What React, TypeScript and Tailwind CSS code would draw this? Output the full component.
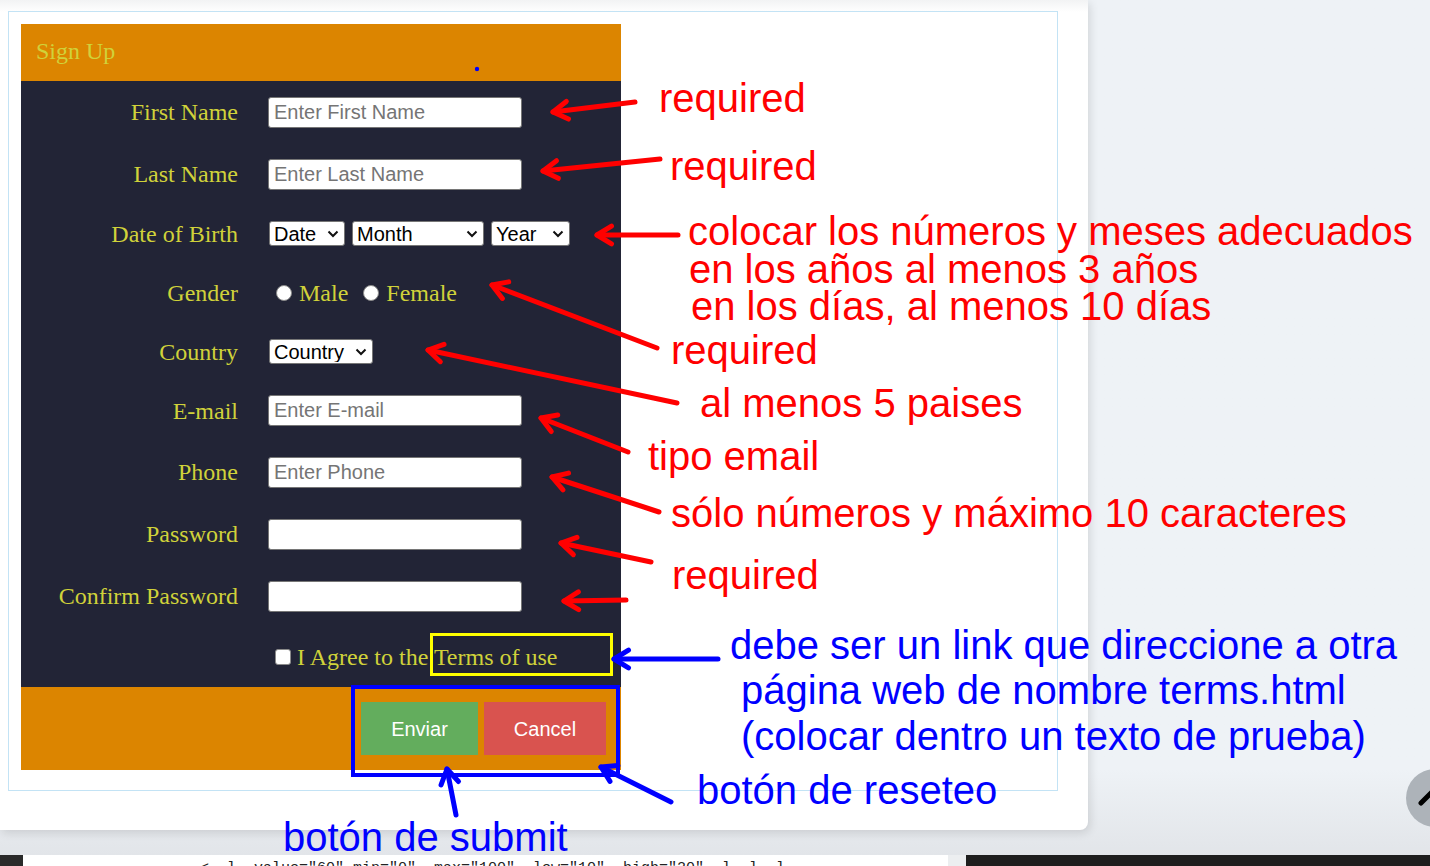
import React from "react";

const serif = { fontFamily: '"Liberation Serif", "Times New Roman", serif' };
const sans = { fontFamily: '"Liberation Sans", Arial, sans-serif' };

type Arrow = [number, number, number, number, string];

const arrows: Arrow[] = [
  [635, 102, 553, 112, "#ff0000"],
  [660, 159, 543, 171, "#ff0000"],
  [678, 235, 597, 235, "#ff0000"],
  [657, 348, 492, 285, "#ff0000"],
  [677, 403, 428, 350, "#ff0000"],
  [628, 452, 541, 418, "#ff0000"],
  [659, 512, 552, 477, "#ff0000"],
  [651, 562, 561, 543, "#ff0000"],
  [626, 600, 564, 601, "#ff0000"],
  [718, 659, 614, 659, "#0000ff"],
  [671, 802, 601, 767, "#0000ff"],
  [456, 815, 447, 769, "#0000ff"],
];

type Note = { x: number; base: number; text: string; color: string };

const notes: Note[] = [
  { x: 659, base: 112, text: "required", color: "#ff0000" },
  { x: 670, base: 180, text: "required", color: "#ff0000" },
  { x: 688, base: 245, text: "colocar los números y meses adecuados", color: "#ff0000" },
  { x: 689, base: 283, text: "en los años al menos 3 años", color: "#ff0000" },
  { x: 691, base: 320, text: "en los días, al menos 10 días", color: "#ff0000" },
  { x: 671, base: 364, text: "required", color: "#ff0000" },
  { x: 700, base: 417, text: "al menos 5 paises", color: "#ff0000" },
  { x: 648, base: 470, text: "tipo email", color: "#ff0000" },
  { x: 671, base: 527, text: "sólo números y máximo 10 caracteres", color: "#ff0000" },
  { x: 672, base: 589, text: "required", color: "#ff0000" },
  { x: 730, base: 659, text: "debe ser un link que direccione a otra", color: "#0000ff" },
  { x: 741, base: 704, text: "página web de nombre terms.html", color: "#0000ff" },
  { x: 741, base: 750, text: "(colocar dentro un texto de prueba)", color: "#0000ff" },
  { x: 697, base: 804, text: "botón de reseteo", color: "#0000ff" },
  { x: 283, base: 851, text: "botón de submit", color: "#0000ff" },
];

function head(a: Arrow) {
  const [x1, y1, x2, y2] = a;
  const ang = Math.atan2(y1 - y2, x1 - x2);
  const L = 17;
  const s = 0.55;
  const ax = x2 + L * Math.cos(ang + s);
  const ay = y2 + L * Math.sin(ang + s);
  const bx = x2 + L * Math.cos(ang - s);
  const by = y2 + L * Math.sin(ang - s);
  return `M${ax} ${ay} L${x2} ${y2} L${bx} ${by}`;
}

function Chevron() {
  return (
    <svg width="12" height="8" viewBox="0 0 12 8" className="pointer-events-none absolute right-[6px] top-1/2 -translate-y-1/2">
      <path d="M1.5 1.5 L6 6 L10.5 1.5" fill="none" stroke="#111" strokeWidth="2" />
    </svg>
  );
}

function Select({ w, label, options }: { w: number; label: string; options: string[] }) {
  return (
    <div className="relative h-[25px]" style={{ width: w }}>
      <select
        defaultValue=""
        className="h-full w-full appearance-none rounded-[3px] border border-[#767676] bg-white pl-[4px] text-[20px] leading-none text-black outline-none"
        style={sans}
      >
        <option value="">{label}</option>
        {options.map((o) => (
          <option key={o} value={o}>
            {o}
          </option>
        ))}
      </select>
      <Chevron />
    </div>
  );
}

function TextInput({ placeholder, type = "text" }: { placeholder?: string; type?: string }) {
  return (
    <input
      type={type}
      placeholder={placeholder}
      className="h-[31px] w-[254px] rounded-[3px] border border-[#767676] bg-white px-[5px] text-[20px] text-black placeholder:text-[#757575] outline-none"
      style={sans}
    />
  );
}

function Row({ h, label, children }: { h: number; label: string; children?: React.ReactNode }) {
  return (
    <div className="flex items-center" style={{ height: h }}>
      <div className="w-[217px] text-right text-[24px] leading-none text-[#d0d23a]" style={serif}>
        {label}
      </div>
      <div className="ml-[30px] flex items-center">{children}</div>
    </div>
  );
}

export default function App() {
  const days = Array.from({ length: 31 }, (_, i) => String(i + 1));
  const months = ["Enero", "Febrero", "Marzo", "Abril", "Mayo", "Junio", "Julio", "Agosto", "Septiembre", "Octubre", "Noviembre", "Diciembre"];
  const years = ["2000", "2001", "2002", "2003", "2004"];
  const countries = ["Perú", "Chile", "México", "Colombia", "Argentina"];

  return (
    <div className="relative h-[866px] w-[1430px] overflow-hidden bg-[#eef2f6]">
      <div className="flex h-full flex-col">
        <div className="relative h-[855px] bg-gradient-to-b from-[#eef2f6] from-[90%] to-[#e2e5e9]">
          <div className="relative h-[830px] w-[1088px] rounded-br-[8px] bg-white pl-[8px] pt-[11px] shadow-[2px_3px_10px_rgba(0,0,0,0.12)]">
            <div className="absolute left-0 top-0 h-[12px] w-full bg-gradient-to-b from-[#f2f3f4] to-white" />
            <div className="relative h-[780px] w-[1050px] border border-[#c3e3f5] pl-[12px] pt-[12px]">
              <form className="w-[600px]">
                <div className="flex h-[57px] items-center bg-[#dc8500] pb-[3px] pl-[15px]">
                  <span className="text-[24px] leading-none text-[#d0d23a]" style={serif}>
                    Sign Up
                  </span>
                </div>
                <div className="bg-[#222436]">
                  <Row h={62} label="First Name">
                    <TextInput placeholder="Enter First Name" />
                  </Row>
                  <Row h={62} label="Last Name">
                    <TextInput placeholder="Enter Last Name" />
                  </Row>
                  <Row h={57} label="Date of Birth">
                    <div className="ml-[1px] flex items-center gap-[7px]">
                      <Select w={76} label="Date" options={days} />
                      <Select w={132} label="Month" options={months} />
                      <Select w={79} label="Year" options={years} />
                    </div>
                  </Row>
                  <Row h={61} label="Gender">
                    <label className="ml-[8px] flex items-center text-[24px] leading-none text-[#d0d23a]" style={serif}>
                      <input type="radio" name="g" className="h-[16px] w-[16px] appearance-none rounded-full border border-[#8a8a8a] bg-white" />
                      <span className="ml-[7px]">Male</span>
                    </label>
                    <label className="ml-[15px] flex items-center text-[24px] leading-none text-[#d0d23a]" style={serif}>
                      <input type="radio" name="g" className="h-[16px] w-[16px] appearance-none rounded-full border border-[#8a8a8a] bg-white" />
                      <span className="ml-[7px]">Female</span>
                    </label>
                  </Row>
                  <Row h={57} label="Country">
                    <div className="ml-[1px]">
                      <Select w={104} label="Country" options={countries} />
                    </div>
                  </Row>
                  <Row h={61} label="E-mail">
                    <TextInput type="email" placeholder="Enter E-mail" />
                  </Row>
                  <Row h={62} label="Phone">
                    <TextInput placeholder="Enter Phone" />
                  </Row>
                  <Row h={62} label="Password">
                    <TextInput type="password" />
                  </Row>
                  <Row h={62} label="Confirm Password">
                    <TextInput type="password" />
                  </Row>
                  <div className="flex h-[60px] items-center pl-[254px]">
                    <input type="checkbox" className="h-[16px] w-[16px] appearance-none rounded-[3px] border border-[#8a8a8a] bg-white" />
                    <span className="ml-[6px] text-[24px] leading-none text-[#d0d23a]" style={serif}>
                      I Agree to the{" "}
                      <a href="terms.html" className="text-[#d0d23a] no-underline">
                        Terms of use
                      </a>
                    </span>
                  </div>
                </div>
                <div className="flex h-[83px] items-center justify-end gap-[6px] bg-[#dc8500] pr-[15px]">
                  <button type="submit" className="h-[53px] w-[117px] bg-[#63ad5d] text-[20px] text-white" style={sans}>
                    Enviar
                  </button>
                  <button type="reset" className="h-[53px] w-[122px] bg-[#d9534f] text-[20px] text-white" style={sans}>
                    Cancel
                  </button>
                </div>
              </form>
            </div>
          </div>
        </div>
        <div className="flex h-[11px]">
          <div className="w-[23px] bg-[#2a2a2a]" />
          <div className="relative w-[925px] overflow-hidden bg-white">
            <div
              className="absolute left-[150px] top-[6px] whitespace-pre text-[15px] leading-[15px] text-[#222]"
              style={{ fontFamily: '"Liberation Mono", monospace' }}
            >
              {'   <  l  value="60" min="0"  max="100"  low="10"  high="20"  l  l  l'}
            </div>
          </div>
          <div className="w-[18px] bg-[#eceef0]" />
          <div className="flex-1 bg-[#1e1e1e]" />
        </div>
      </div>

      {/* scroll button */}
      <div className="absolute left-[1406px] top-[769px] h-[58px] w-[58px] rounded-full bg-[#adb3b9]">
        <svg width="58" height="58" className="absolute left-0 top-0">
          <path d="M15 34 L26 23" stroke="#000" strokeWidth="5" strokeLinecap="round" />
        </svg>
      </div>

      {/* annotations */}
      <svg width="1430" height="866" className="pointer-events-none absolute left-0 top-0">
        <circle cx="477" cy="69" r="2.2" fill="#0000ff" />
        <rect x="431.5" y="634.5" width="180" height="40" fill="none" stroke="#ffff00" strokeWidth="3" />
        <rect x="353" y="687" width="265" height="88" fill="none" stroke="#0000ff" strokeWidth="4" />
        {arrows.map((a, i) => (
          <g key={i} stroke={a[4]} strokeWidth="5" strokeLinecap="round" strokeLinejoin="round" fill="none">
            <path d={`M${a[0]} ${a[1]} L${a[2]} ${a[3]}`} />
            <path d={head(a)} />
          </g>
        ))}
      </svg>
      {notes.map((n, i) => (
        <div
          key={i}
          className="pointer-events-none absolute whitespace-pre text-[40px] leading-[36px]"
          style={{ ...sans, left: n.x, top: n.base - 32, color: n.color }}
        >
          {n.text}
        </div>
      ))}
    </div>
  );
}
